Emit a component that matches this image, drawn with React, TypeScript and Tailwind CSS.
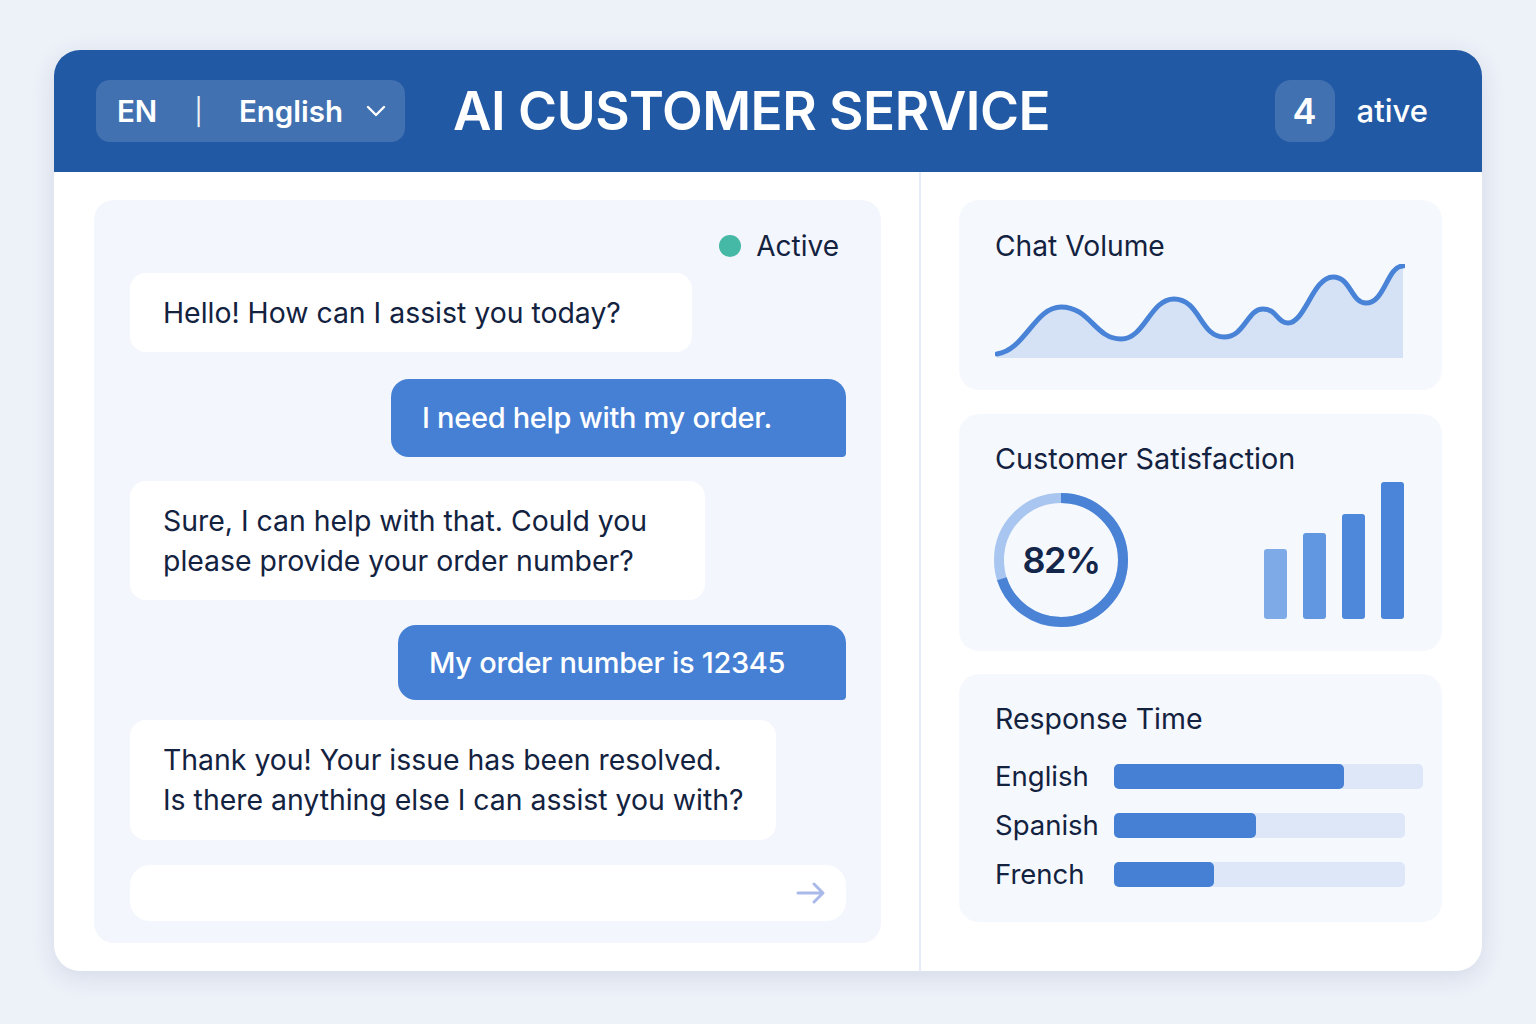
import React from "react";

const font = { fontFamily: "Inter, 'Noto Sans', 'Liberation Sans', sans-serif" };

function ChatVolume() {
  const line =
    "M2,90 C30,86 40,43 66,43 C95,43 100,75 126,75 C150,75 155,35 179,35 C205,35 205,73 229,73 C250,73 252,45 268,45 C282,45 282,59 293,59 C310,59 318,13 338,13 C356,13 356,39 371,39 C390,39 392,2 408,2";
  return (
    <svg width="410" height="96" viewBox="0 0 410 96" className="block">
      <path d={line + " L408,94 L2,94 Z"} fill="#d5e2f6" />
      <path d={line} fill="none" stroke="#4883d8" strokeWidth="5" strokeLinecap="round" />
    </svg>
  );
}

function Donut() {
  const r = 62;
  const c = 2 * Math.PI * r;
  const dark = 0.7 * c;
  return (
    <div className="relative w-[136px] h-[136px]">
      <svg width="136" height="136" viewBox="0 0 136 136" className="absolute inset-0">
        <circle cx="68" cy="68" r={r} fill="none" stroke="#a8c6f0" strokeWidth="10" />
        <circle
          cx="68"
          cy="68"
          r={r}
          fill="none"
          stroke="#4a82d6"
          strokeWidth="10"
          strokeDasharray={`${dark} ${c}`}
          transform="rotate(-90 68 68)"
        />
      </svg>
      <div className="absolute inset-0 flex items-center justify-center text-[36px] font-semibold text-[#14264a] tracking-[-1.5px]">
        82%
      </div>
    </div>
  );
}

function Bot({ children, w }: { children: React.ReactNode; w: string }) {
  return (
    <div className={`bg-white rounded-[16px] pl-[33px] whitespace-nowrap text-[28.4px] leading-[40px] text-[#13223f] ${w}`}>
      {children}
    </div>
  );
}

function User({ children, w, h }: { children: React.ReactNode; w: string; h: string }) {
  return (
    <div
      className={`self-end bg-[#4580d5] rounded-[18px] rounded-br-[4px] pl-[31px] whitespace-nowrap flex items-center text-white text-[29px] font-medium tracking-[-0.3px] ${w} ${h}`}
    >
      {children}
    </div>
  );
}

function RespRow({ label, fill, track }: { label: string; fill: number; track: number }) {
  return (
    <div className="flex items-center h-[25px]">
      <div className="w-[119px] text-[27.5px] text-[#13223f]">{label}</div>
      <div className="h-[25px] rounded-[5px] bg-[#dde7f7]" style={{ width: track }}>
        <div className="h-full rounded-[5px] bg-[#4580d5]" style={{ width: fill }} />
      </div>
    </div>
  );
}

export default function App() {
  return (
    <div className="w-[1536px] h-[1024px] bg-[#edf1f8] pt-[50px] pl-[54px]" style={font}>
      <div className="w-[1428px] h-[921px] bg-white rounded-[26px] overflow-hidden shadow-[0_6px_24px_rgba(30,60,120,0.12)] flex flex-col">
        {/* Header */}
        <div className="h-[122px] bg-[#2259a4] flex items-center pl-[42px] pr-[54px] shrink-0">
          <div className="h-[62px] w-[309px] rounded-[14px] bg-white/15 flex items-center pl-[21px] text-white font-semibold text-[29.5px]">
            <span>EN</span>
            <span className="ml-[37px] font-normal text-[26px] opacity-90">|</span>
            <span className="ml-[36px]">English</span>
            <svg width="22" height="14" viewBox="0 0 22 14" className="ml-[22px]">
              <path d="M3 3 L11 11 L19 3" fill="none" stroke="white" strokeWidth="2.4" strokeLinecap="round" strokeLinejoin="round" />
            </svg>
          </div>
          <div className="ml-[48px] text-white font-semibold text-[53px] tracking-[-0.5px] leading-none">
            AI CUSTOMER SERVICE
          </div>
          <div className="ml-auto flex items-center">
            <div className="w-[60px] h-[62px] rounded-[16px] bg-white/15 flex items-center justify-center text-white text-[36px] font-semibold">
              4
            </div>
            <span className="ml-[22px] text-white text-[31px] font-medium">ative</span>
          </div>
        </div>

        {/* Body */}
        <div className="flex flex-1 min-h-0">
          <div className="pl-[40px] pt-[28px] pb-[28px] pr-[38px] border-r-2 border-[#e6ecf6]">
            <div className="w-[787px] h-full bg-[#f3f6fc] rounded-[20px] pl-[36px] pr-[35px] pt-[30px] flex flex-col">
              <div className="flex items-center justify-end h-[32px] pr-[7px]">
                <div className="w-[22px] h-[22px] rounded-full bg-[#46b8a6]" />
                <span className="ml-[15px] text-[28px] text-[#13223f]">Active</span>
              </div>
              <div className="mt-[11px] flex flex-col">
                <Bot w="w-[562px] h-[79px] flex items-center">Hello! How can I assist you today?</Bot>
                <div className="mt-[27px] flex flex-col">
                  <User w="w-[455px]" h="h-[78px]">I need help with my order.</User>
                </div>
                <div className="mt-[24px]">
                  <Bot w="w-[575px] h-[119px] flex items-center">
                    <span>
                      Sure, I can help with that. Could you
                      <br />
                      please provide your order number?
                    </span>
                  </Bot>
                </div>
                <div className="mt-[25px] flex flex-col">
                  <User w="w-[448px]" h="h-[75px]">My order number is 12345</User>
                </div>
                <div className="mt-[20px]">
                  <Bot w="w-[646px] h-[120px] flex items-center">
                    <span>
                      Thank you! Your issue has been resolved.
                      <br />
                      Is there anything else I can assist you with?
                    </span>
                  </Bot>
                </div>
                <div className="mt-[25px] h-[56px] bg-white rounded-[20px] flex items-center justify-end pr-[20px]">
                  <svg width="30" height="26" viewBox="0 0 30 26">
                    <path d="M2 13 H26 M18 4 L27 13 L18 22" fill="none" stroke="#a9b9e8" strokeWidth="3" strokeLinecap="round" strokeLinejoin="round" />
                  </svg>
                </div>
              </div>
            </div>
          </div>

          {/* Right column */}
          <div className="pl-[38px] pt-[28px] flex flex-col">
            <div className="w-[483px] h-[190px] bg-[#f5f8fd] rounded-[20px] pl-[36px] pt-[28px]">
              <div className="text-[28.2px] text-[#13223f] leading-[36px]">Chat Volume</div>
              <div className="mt-[0px]">
                <ChatVolume />
              </div>
            </div>
            <div className="mt-[24px] w-[483px] h-[237px] bg-[#f5f8fd] rounded-[20px] pl-[36px] pt-[27px] pr-[38px]">
              <div className="text-[28.8px] text-[#13223f] leading-[36px]">Customer Satisfaction</div>
              <div className="flex items-end justify-between mt-[5px]">
                <div className="mb-[4px] -ml-[2px]">
                  <Donut />
                </div>
                <div className="flex items-end gap-[16px] pb-[13px]">
                  <div className="w-[23px] h-[70px] rounded-[3px] bg-[#7eaae8]" />
                  <div className="w-[23px] h-[86px] rounded-[3px] bg-[#6097e0]" />
                  <div className="w-[23px] h-[105px] rounded-[3px] bg-[#4d88db]" />
                  <div className="w-[23px] h-[137px] rounded-[3px] bg-[#4a85da]" />
                </div>
              </div>
            </div>
            <div className="mt-[23px] w-[483px] h-[248px] bg-[#f5f8fd] rounded-[20px] pl-[36px] pt-[27px]">
              <div className="text-[28.5px] text-[#13223f] leading-[36px]">Response Time</div>
              <div className="mt-[27px] flex flex-col gap-[24px]">
                <RespRow label="English" fill={230} track={309} />
                <RespRow label="Spanish" fill={142} track={291} />
                <RespRow label="French" fill={100} track={291} />
              </div>
            </div>
          </div>
        </div>
      </div>
    </div>
  );
}
